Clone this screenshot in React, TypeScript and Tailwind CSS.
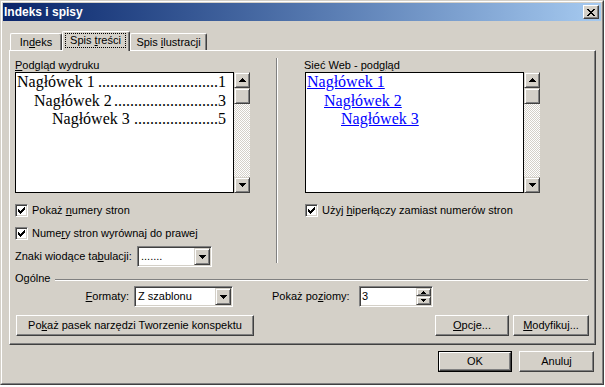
import React from "react";

const BTN =
  "border border-t-white border-l-white border-r-[#404040] border-b-[#404040] shadow-[inset_-1px_-1px_0_#808080] bg-[#d4d0c8]";
const SBB =
  "border border-t-[#d4d0c8] border-l-[#d4d0c8] border-r-[#404040] border-b-[#404040] shadow-[inset_1px_1px_0_#ffffff,inset_-1px_-1px_0_#808080] bg-[#d4d0c8]";
const SUNK =
  "border border-t-[#808080] border-l-[#808080] border-r-white border-b-white shadow-[inset_1px_1px_0_#404040,inset_-1px_-1px_0_#d4d0c8] p-[1px] bg-white";

type R = [number, number, number, number];

function Px({ w, h, rects }: { w: number; h: number; rects: R[] }) {
  return (
    <svg width={w} height={h} viewBox={`0 0 ${w} ${h}`} shapeRendering="crispEdges" className="block">
      {rects.map(([x, y, rw, rh], i) => (
        <rect key={i} x={x} y={y} width={rw} height={rh} fill="#000" />
      ))}
    </svg>
  );
}

const Down = () => <Px w={7} h={4} rects={[[0, 0, 7, 1], [1, 1, 5, 1], [2, 2, 3, 1], [3, 3, 1, 1]]} />;
const Up = () => <Px w={7} h={4} rects={[[3, 0, 1, 1], [2, 1, 3, 1], [1, 2, 5, 1], [0, 3, 7, 1]]} />;
const SpinUp = () => <Px w={5} h={3} rects={[[2, 0, 1, 1], [1, 1, 3, 1], [0, 2, 5, 1]]} />;
const SpinDown = () => <Px w={5} h={3} rects={[[0, 0, 5, 1], [1, 1, 3, 1], [2, 2, 1, 1]]} />;
const CloseX = () => (
  <Px
    w={8}
    h={7}
    rects={[
      [0, 0, 2, 1], [6, 0, 2, 1],
      [1, 1, 2, 1], [5, 1, 2, 1],
      [2, 2, 4, 1],
      [3, 3, 2, 1],
      [2, 4, 4, 1],
      [1, 5, 2, 1], [5, 5, 2, 1],
      [0, 6, 2, 1], [6, 6, 2, 1],
    ]}
  />
);

function CheckBox() {
  return (
    <div className={`w-[13px] h-[13px] shrink-0 flex items-center justify-center ${SUNK}`}>
      <Px
        w={7}
        h={7}
        rects={[[0, 2, 1, 3], [1, 3, 1, 3], [2, 4, 1, 3], [3, 3, 1, 3], [4, 2, 1, 3], [5, 1, 1, 3], [6, 0, 1, 3]]}
      />
    </div>
  );
}

function ScrollBar() {
  return (
    <div className="w-[16px] h-[121px] flex flex-col shrink-0">
      <div className={`h-[16px] shrink-0 flex items-center justify-center ${SBB}`}>
        <Up />
      </div>
      <div className={`h-[16px] shrink-0 ${SBB}`} />
      <div className="flex-1 [background-image:repeating-conic-gradient(#ffffff_0%_25%,#d4d0c8_0%_50%)] [background-size:2px_2px]" />
      <div className={`h-[16px] shrink-0 flex items-center justify-center ${SBB}`}>
        <Down />
      </div>
    </div>
  );
}

function TocLine({ pad, label, num, dots }: { pad: string; label: string; num: string; dots: string }) {
  return (
    <div className={`flex ${pad}`}>
      <span className="whitespace-nowrap">{label}</span>
      <span className="flex-1 flex justify-end whitespace-nowrap pl-[1px]">
        <span>{dots}</span>
      </span>
      <span>{num}</span>
    </div>
  );
}

function Combo({ className, text }: { className: string; text: string }) {
  return (
    <div className={`h-[21px] flex ${SUNK} ${className}`}>
      <div className="flex-1 flex items-center pl-[2px] whitespace-nowrap overflow-hidden">{text}</div>
      <div className={`w-[16px] h-full shrink-0 flex items-center justify-center ${SBB}`}>
        <Down />
      </div>
    </div>
  );
}

function Button({ className, children }: { className: string; children: React.ReactNode }) {
  return (
    <div className={`h-[21px] flex items-center justify-center whitespace-nowrap ${BTN} ${className}`}>
      {children}
    </div>
  );
}

export default function App() {
  return (
    <div className="w-[605px] h-[387px] bg-white font-['Liberation_Sans',Arial,sans-serif] text-[11px] leading-[13px] text-black">
      <div className="w-[604px] h-[385px] border border-t-[#d4d0c8] border-l-[#d4d0c8] border-r-[#404040] border-b-[#404040]">
        <div className="h-full border border-t-white border-l-white border-r-[#808080] border-b-[#808080] bg-[#d4d0c8] p-[1px] flex flex-col">
          {/* Title bar */}
          <div className="h-[18px] shrink-0 flex items-center justify-between bg-linear-to-r from-[#0a246a] to-[#a6caf0] pl-[1px] pr-[2px]">
            <span className="text-white font-bold text-[12px] leading-[14px]">Indeks i spisy</span>
            <div className={`w-[16px] h-[14px] flex items-center justify-center ${BTN}`}>
              <CloseX />
            </div>
          </div>

          {/* Tabs */}
          <div className="mt-[10px] ml-[7px] h-[19px] flex items-end relative z-10">
            <div className="w-[52px] h-[17px] flex justify-center pt-[2px] border-t border-l border-r border-t-white border-l-white border-r-[#404040] shadow-[inset_-1px_0_0_#808080] rounded-t-[2px]">
              <span>
                In<u>d</u>eks
              </span>
            </div>
            <div className="w-[68px] h-[20px] -mb-[1px] bg-[#d4d0c8] border-t border-l border-r border-t-white border-l-white border-r-[#404040] shadow-[inset_-1px_0_0_#808080] rounded-t-[2px]">
              <div className="ml-[2px] mr-[3px] mt-[1px] h-[15px] border border-dotted border-black flex items-center justify-center">
                <span>
                  Spis <u>t</u>reści
                </span>
              </div>
            </div>
            <div className="w-[77px] h-[17px] flex justify-center pt-[2px] border-t border-l border-r border-t-white border-l-white border-r-[#404040] shadow-[inset_-1px_0_0_#808080] rounded-t-[2px]">
              <span>
                Spis <u>i</u>lustracji
              </span>
            </div>
          </div>

          {/* Panel */}
          <div className="ml-[6px] w-[587px] h-[295px] shrink-0 border border-t-white border-l-white border-r-[#404040] border-b-[#404040] shadow-[inset_-1px_-1px_0_#808080] flex flex-col">
            <div className="flex pt-[8px]">
              {/* Left column */}
              <div className="ml-[5px] w-[261px] flex flex-col">
                <div className="h-[13px]">
                  <u>P</u>odgląd wydruku
                </div>
                <div className="flex h-[121px]">
                  <div className="w-[219px] h-[121px] border border-black bg-white font-['Liberation_Serif','Times_New_Roman',serif] text-[16px] leading-[18.5px] pr-[7px]">
                    <TocLine pad="pl-[1px]" label="Nagłówek 1" num="1" dots=".............................." />
                    <TocLine pad="pl-[18px]" label="Nagłówek 2" num="3" dots=".........................." />
                    <TocLine pad="pl-[36px]" label="Nagłówek 3" num="5" dots="....................." />
                  </div>
                  <ScrollBar />
                </div>
                <div className="mt-[11px] h-[13px] flex items-center">
                  <CheckBox />
                  <span className="ml-[4px]">
                    Pokaż <u>n</u>umery stron
                  </span>
                </div>
                <div className="mt-[10px] h-[13px] flex items-center">
                  <CheckBox />
                  <span className="ml-[4px]">
                    Nume<u>r</u>y stron wyrównaj do prawej
                  </span>
                </div>
                <div className="mt-[6px] h-[21px] flex items-center">
                  <span className="w-[122px]">
                    Znaki wiodące ta<u>b</u>ulacji:
                  </span>
                  <Combo className="w-[75px]" text="......." />
                </div>
              </div>

              {/* Separator */}
              <div className="-mt-[1px] w-[2px] h-[205px] border-l border-r border-l-[#808080] border-r-white" />

              {/* Right column */}
              <div className="ml-[26px] flex flex-col">
                <div className="h-[13px]">
                  Sieć Web - pod<u>g</u>ląd
                </div>
                <div className="flex h-[121px] ml-[1px]">
                  <div className="w-[219px] h-[121px] border border-black bg-white font-['Liberation_Serif','Times_New_Roman',serif] text-[16px] leading-[18.5px] text-[#0000ff]">
                    <div className="pl-[1px]">
                      <span className="underline">Nagłówek 1</span>
                    </div>
                    <div className="pl-[18px]">
                      <span className="underline">Nagłówek 2</span>
                    </div>
                    <div className="pl-[35px]">
                      <span className="underline">Nagłówek 3</span>
                    </div>
                  </div>
                  <ScrollBar />
                </div>
                <div className="mt-[11px] h-[13px] flex items-center ml-[1px]">
                  <CheckBox />
                  <span className="ml-[4px]">
                    Użyj <u>h</u>iperłączy zamiast numerów stron
                  </span>
                </div>
              </div>
            </div>

            {/* Ogólne */}
            <div className="mt-[5px] h-[13px] flex items-center pl-[5px] pr-[7px]">
              <span>Ogólne</span>
              <div className="flex-1 ml-[5px] mt-[2px] h-[2px] border-t border-b border-t-[#808080] border-b-white" />
            </div>

            {/* Formaty row */}
            <div className="mt-[1px] h-[21px] flex items-center">
              <span className="ml-[5px] w-[114px] text-right">
                <u>F</u>ormaty:
              </span>
              <Combo className="ml-[5px] w-[99px]" text="Z szablonu" />
              <span className="ml-[39px] w-[87px]">
                Pokaż po<u>z</u>iomy:
              </span>
              <div className={`w-[74px] h-[21px] flex ${SUNK}`}>
                <div className="flex-1 flex items-center pl-[1px]">3</div>
                <div className="w-[15px] flex flex-col">
                  <div className={`h-[8px] flex items-center justify-center ${SBB}`}>
                    <SpinUp />
                  </div>
                  <div className={`flex-1 flex items-center justify-center ${SBB}`}>
                    <SpinDown />
                  </div>
                </div>
              </div>
            </div>

            {/* Buttons row */}
            <div className="mt-[8px] h-[21px] flex">
              <Button className="ml-[6px] w-[238px]">
                <span>
                  Po<u>k</u>aż pasek narzędzi Tworzenie konspektu
                </span>
              </Button>
              <div className="flex-1" />
              <Button className="w-[74px]">
                <span>
                  <u>O</u>pcje...
                </span>
              </Button>
              <Button className="ml-[4px] mr-[6px] w-[76px]">
                <span>
                  <u>M</u>odyfikuj...
                </span>
              </Button>
            </div>
          </div>

          {/* Bottom buttons */}
          <div className="mt-[6px] flex justify-end pr-[7px]">
            <div className="w-[74px] h-[21px] border border-black">
              <div className={`h-full flex items-center justify-center ${BTN}`}>OK</div>
            </div>
            <Button className="ml-[7px] w-[75px]">Anuluj</Button>
          </div>
        </div>
      </div>
    </div>
  );
}
